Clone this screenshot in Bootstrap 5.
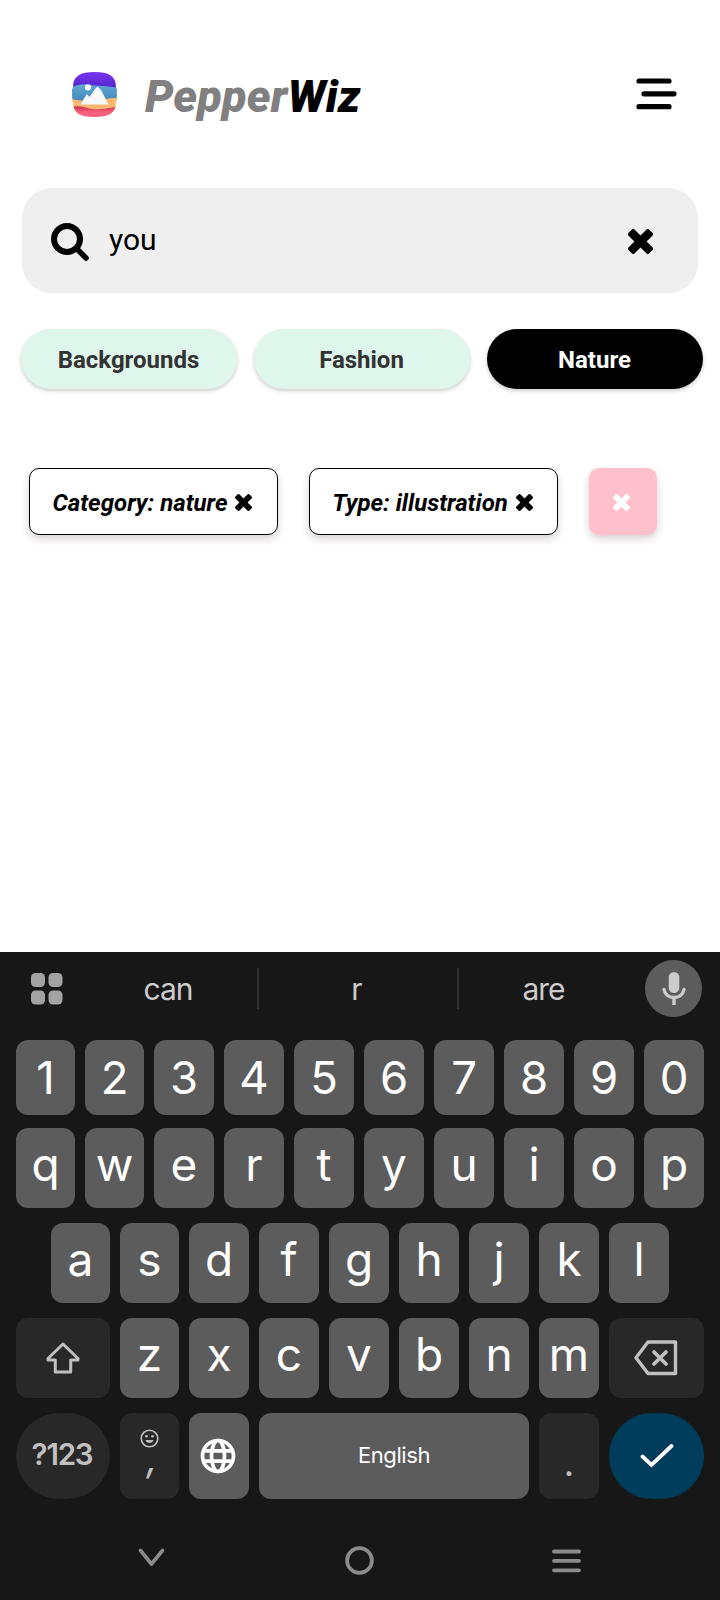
<!DOCTYPE html>
<html lang="en">
<head>
<meta charset="utf-8">
<meta name="viewport" content="width=device-width, initial-scale=1">
<title>PepperWiz</title>
<link href="https://cdn.jsdelivr.net/npm/bootstrap@5.3.0/dist/css/bootstrap.min.css" rel="stylesheet">
<style>
body{font-family:Roboto,sans-serif;color:#000;background:#fff;line-height:1}
svg{display:block;flex:none}
.screen{width:720px;height:1600px}
.app-head{height:188px;padding:0 42px 0 72px}
.brand-title{font-size:45px;font-weight:900;font-style:italic;margin-left:27px;letter-spacing:.2px;padding-top:5px;white-space:nowrap}
.brand-title .pepper{color:#808080}
.search-box{height:105px;margin:0 22px;border-radius:30px;background:#efefef;padding:1px 45px 0 29px}
.search-text{font-size:30px;margin-left:20px;line-height:35px;padding-bottom:3px}
.cats{padding:36px 17px 0 21px;gap:17px}
.cat{height:60px;border-radius:30px;background:#dff6ed;color:#333;font-size:24px;font-weight:700;box-shadow:0 2px 4px rgba(0,0,0,.2);border:0;flex:1;padding:1px 1px 0 0}
.cat.active{background:#000;color:#fff}
.filters{padding:79px 29px 0;gap:31px}
.chip{height:67px;width:249px;border:1.500px solid #000;border-radius:10px;background:#fff;font-size:24px;font-weight:700;font-style:italic;box-shadow:0 4px 9px rgba(40,0,20,.18);white-space:nowrap;gap:8px;padding:2px 2px 0 0}
.chip-clear{width:68px;border:0;background:#ffc0cb;padding-right:3px}
.keyboard{height:648px;background:#171717;color:#fff;font-family:Inter,"Open Sans",sans-serif}
.suggest{height:73px;color:#ccc;font-size:30px;letter-spacing:-1px;padding:0 18px 0 31px}
.word{width:178px;height:41px}
.word+.word{border-left:2px solid #303030;width:200px;padding-right:3px}
.word+.word+.word{width:174px}
.mic{width:57px;height:57px;border-radius:50%;background:#5c5c5c}
.keys{padding:15px 16px 0}
.krow{gap:10px;height:80px;margin-bottom:15px}
.krow.nums{height:75px;margin-bottom:13px}
.krow.mid{padding:0 35px}
.krow.last{height:86px}
.key{flex:1 1 0;min-width:0;border-radius:12px;background:#5c5c5c;font-size:46px;padding-bottom:9px}
.krow[data-keys] .key:nth-child(-n+2),.key.narrow,.run .key:first-child{flex:0 0 59px}
.run{gap:10px}
.nums .key{padding-bottom:0;font-size:45.500px}
.key.dim{background:#282828;color:#c0c0c0;padding:0}
.key.wide{flex:0 0 94px}
.key.wide:last-child{flex-basis:95px}
.key.round{border-radius:43px}
.key.sym{font-size:29.500px;font-weight:600;letter-spacing:-1.200px;padding-bottom:2px;padding-right:2px}
.key.space{flex:0 0 270px;font-size:22px;letter-spacing:-.4px;padding:0 0 2px}
.key.enter{background:#003d5c;padding:0}
.comma{font-size:38px;line-height:40px;margin:-10px 0 0 5px}
.dot{font-size:36px;line-height:44px;padding:0 0 14px}
.navrow{height:72px;padding:22px 138px 0}
</style>
</head>
<body>
<svg width="0" height="0" class="position-absolute" aria-hidden="true">
<symbol id="cross" viewBox="0 0 24 24"><g fill="currentColor"><rect x="-2" y="7.900" width="28" height="8.200" rx="2" transform="rotate(45 12 12)"/><rect x="-2" y="7.900" width="28" height="8.200" rx="2" transform="rotate(-45 12 12)"/></g></symbol>
</svg>
<main class="screen d-flex flex-column overflow-hidden">
<header class="app-head d-flex align-items-center">
<svg width="46" height="46" viewBox="0 0 46 46" style="margin-top:2px">
<defs><clipPath id="tile"><path d="M1 15C1 4 8 0 22.500 0S44 4 44 15c1.300 5 1.300 10 0 15 0 11-7 15-21.500 15S1 41 1 30C-.3 25-.3 20 1 15Z"/></clipPath>
<linearGradient id="sky" x2="0" y2="1"><stop stop-color="#7b35ed"/><stop offset="1" stop-color="#4a21c8"/></linearGradient>
<linearGradient id="sea" x2="0" y2="1"><stop stop-color="#62a8d7"/><stop offset="1" stop-color="#3f86b8"/></linearGradient>
<linearGradient id="dusk" x2="0" y2="1"><stop stop-color="#cb304f"/><stop offset=".5" stop-color="#f8607e"/></linearGradient></defs>
<g clip-path="url(#tile)"><path fill="url(#sky)" d="M0 0h46v20H0z"/><path fill="url(#sea)" d="M0 15c5-2 10-3 16-3 10 3 18 1 30 4v14H0z"/><path fill="#f8b96e" d="M0 27c8 2 14 2 20 1 9 0 15-2 26-2v16H0z"/><path fill="url(#dusk)" d="M0 35c8-2 13 1 20 2 9 1 15-1 26-2v11H0z"/></g>
<circle cx="16" cy="15.500" r="3" fill="#fff"/><path d="M8.700 32.500 12 26.500 15 22l2.500 3L23 17l2.500-2.500L29 18l7.500 14.500z" fill="#f7f8fc"/></svg>
<div class="brand-title"><span class="pepper">Pepper</span>Wiz</div>
<svg class="ms-auto" width="42" height="32" viewBox="0 0 42 32" stroke="#000" stroke-width="5.200" stroke-linecap="round"><path d="M3 3H33M8 15.800H38M3 28.700H33"/></svg>
</header>
<div class="search-box d-flex align-items-center">
<svg width="38" height="38" viewBox="0 0 38 38" fill="none" stroke="#000" stroke-width="6" stroke-linecap="round" style="margin-top:1px"><circle cx="16" cy="16" r="13"/><path stroke-width="5.500" d="m27 27 8 8"/></svg>
<span class="search-text">you</span>
<svg class="ms-auto" width="25" height="25"><use href="#cross"/></svg>
</div>
<div class="cats d-flex">
<button class="cat">Backgrounds</button><button class="cat">Fashion</button><button class="cat active">Nature</button>
</div>
<div class="filters d-flex">
<div class="chip d-flex align-items-center justify-content-center"><span>Category: nature</span><svg width="17" height="17"><use href="#cross"/></svg></div>
<div class="chip d-flex align-items-center justify-content-center"><span>Type: illustration</span><svg width="17" height="17"><use href="#cross"/></svg></div>
<div class="chip chip-clear d-flex align-items-center justify-content-center text-white"><svg width="17" height="17"><use href="#cross"/></svg></div>
</div>
<section class="keyboard mt-auto">
<div class="suggest d-flex align-items-center">
<svg width="32" height="32" viewBox="0 0 32 32" fill="#a3a3a3"><rect width="14" height="14" rx="4.500"/><rect x="17.500" width="14" height="14" rx="4.500"/><rect y="17.500" width="14" height="14" rx="4.500"/><rect x="17.500" y="17.500" width="14" height="14" rx="4.500"/></svg>
<div class="d-flex ms-3 me-auto">
<div class="word d-flex align-items-center justify-content-center">can</div><div class="word d-flex align-items-center justify-content-center">r</div><div class="word d-flex align-items-center justify-content-center">are</div>
</div>
<div class="mic d-flex align-items-center justify-content-center"><svg width="24" height="33" viewBox="0 0 24 33" fill="none" stroke="#ccc" stroke-width="3.400"><rect x="6.700" y="0" width="10.600" height="21" rx="5.300" fill="#ccc" stroke="none"/><path stroke-linecap="round" d="M2 17.500c1 5 5 8 10 8s9-3 10-8"/><path d="M12 25v8"/></svg></div>
</div>
<div class="keys">
<div class="krow nums d-flex" data-keys="1234567890"></div>
<div class="krow d-flex" data-keys="qwertyuiop"></div>
<div class="krow mid d-flex" data-keys="asdfghjkl"></div>
<div class="krow d-flex">
<div class="key dim wide d-flex align-items-center justify-content-center"><svg width="34" height="32" viewBox="0 0 34 32" fill="none" stroke="#c0c0c0" stroke-width="3" stroke-linejoin="round" style="margin:0 1px 1px 0"><path d="M17 2 2 16.500V18h7.300v12h15.400V18H32v-1.500z"/></svg></div>
<div class="run d-flex flex-grow-1" data-keys="zxcvbnm"></div>
<div class="key dim wide d-flex align-items-center justify-content-center"><svg width="44" height="36" viewBox="0 0 44 36" fill="none" stroke="#c0c0c0" stroke-width="3.400" stroke-linejoin="round" stroke-linecap="round" style="margin-left:-2px"><path d="M14 2H41.500V33.500H14L2 17.800z"/><path stroke-width="3.800" d="m20 12 12 12M32 12 20 24"/></svg></div>
</div>
<div class="krow last d-flex">
<div class="key dim wide round sym d-flex align-items-center justify-content-center">?123</div>
<div class="key dim narrow d-flex flex-column align-items-center"><svg class="mt-3" width="19" height="19" viewBox="0 0 19 19" fill="none" stroke="#c0c0c0" stroke-width="1.600" style="margin-right:1px"><circle cx="9.500" cy="9.500" r="8.300"/><path fill="#c0c0c0" stroke="none" d="M5.500 11h8c-.8 4-7.200 4-8 0z"/><g fill="#c0c0c0" stroke="none"><circle cx="6.500" cy="7.200" r="1.300"/><circle cx="12.500" cy="7.200" r="1.300"/></g></svg><span class="comma fst-italic">,</span></div>
<div class="key d-flex align-items-center justify-content-center p-0"><svg width="36" height="36" viewBox="0 0 36 36" fill="none" stroke="#fff" stroke-width="3.700" style="margin-right:2px;margin-bottom:1px"><circle cx="18" cy="18" r="15.500"/><ellipse cx="18" cy="18" rx="6.500" ry="15.500"/><path d="M3 12.800h30M3 23.200h30"/></svg></div>
<div class="key space d-flex align-items-center justify-content-center">English</div>
<div class="key dim d-flex align-items-end justify-content-center"><span class="dot">.</span></div>
<div class="key enter wide round d-flex align-items-center justify-content-center"><svg width="34" height="25" viewBox="0 0 34 25" fill="none" stroke="#fff" stroke-width="3.800" stroke-linecap="round" style="margin-bottom:2px"><path d="m2.500 13.500 9 8.500L31.500 3"/></svg></div>
</div>
</div>
<div class="navrow d-flex justify-content-between align-items-center">
<svg width="28" height="20" viewBox="0 0 28 20" fill="none" stroke="#8b8b8b" stroke-width="3.600" stroke-linecap="round" style="margin-top:-7px"><path d="M2.500 2.500 13.500 16 24.500 2.500" stroke-linejoin="round"/></svg>
<svg width="29" height="29" fill="none" stroke="#8b8b8b" stroke-width="3.800" style="margin-top:-2px"><circle cx="14.500" cy="14.500" r="12.400"/></svg>
<svg width="30" height="24" stroke="#8b8b8b" stroke-width="3.800" stroke-linecap="round"><path d="M2 2.500H27M2 11.900H27M2 21.300H27"/></svg>
</div>
</section>
</main>
<script src="https://cdn.jsdelivr.net/npm/bootstrap@5.3.0/dist/js/bootstrap.bundle.min.js"></script>
<script>
document.querySelectorAll('[data-keys]').forEach(function(row){
  row.dataset.keys.split('').forEach(function(ch){
    var k=document.createElement('div');
    k.className='key d-flex align-items-center justify-content-center';
    k.textContent=ch;
    row.appendChild(k);
  });
});
</script>
</body>
</html>
